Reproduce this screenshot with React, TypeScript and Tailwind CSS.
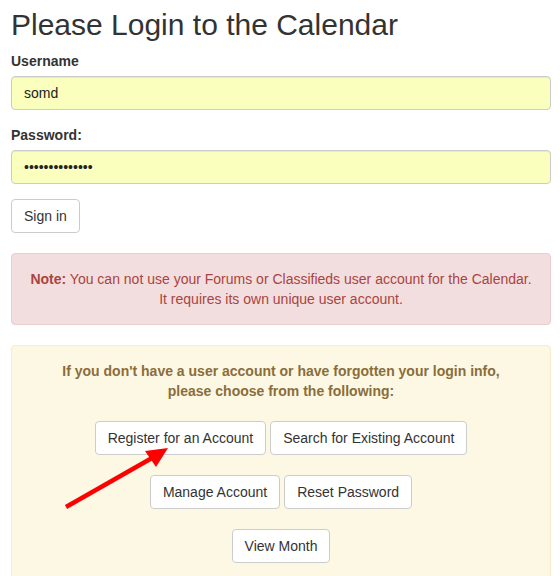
export default function App() {
  return (
    <div className="relative min-h-[576px] bg-white pl-[11px] pr-[9px] pt-[8px] font-['Liberation_Sans',Arial,sans-serif] text-[14px] leading-[20px] text-[#333]">
      {/* Title */}
      <h1 className="text-[30px] leading-[33px] font-normal text-[#333]">Please Login to the Calendar</h1>

      {/* Form */}
      <form onSubmit={(e) => e.preventDefault()}>
        <label className="mt-[10px] mb-[5px] block font-bold">Username</label>
        <input
          type="text"
          readOnly
          value="somd"
          className="block h-[34px] w-full rounded border border-[#ccc] bg-[#faffbd] px-3 text-[14px] text-[#222] shadow-[inset_0_1px_1px_rgba(0,0,0,0.075)] outline-none"
        />
        <label className="mt-[15px] mb-[5px] block font-bold">Password:</label>
        <input
          type="password"
          readOnly
          value="somdpassword12"
          className="block h-[34px] w-full rounded border border-[#ccc] bg-[#faffbd] px-3 text-[14px] text-[#222] shadow-[inset_0_1px_1px_rgba(0,0,0,0.075)] outline-none"
        />
        <button
          type="submit"
          className="mt-[15px] h-[34px] rounded border border-[#ccc] bg-white px-3 text-[14px] text-[#333]"
        >
          Sign in
        </button>
      </form>

      {/* Note */}
      <div className="mt-[20px] rounded border border-[#ebccd1] bg-[#f2dede] p-[15px] text-center text-[#a94442]">
        <b>Note:</b> You can not use your Forums or Classifieds user account for the Calendar.
        <br />
        It requires its own unique user account.
      </div>

      {/* Help box */}
      <div className="mt-[20px] rounded border border-[#faebcc] bg-[#fcf8e3] px-[15px] pt-[15px] pb-[20px] text-center">
        <p className="font-bold text-[#8a6d3b]">
          If you don't have a user account or have forgotten your login info,
          <br />
          please choose from the following:
        </p>
        <div className="mt-[20px] flex flex-col items-center gap-[20px]">
          <div className="flex gap-[4px]">
            <HelpButton label="Register for an Account" />
            <HelpButton label="Search for Existing Account" />
          </div>
          <div className="flex gap-[4px]">
            <HelpButton label="Manage Account" />
            <HelpButton label="Reset Password" />
          </div>
          <div className="flex gap-[4px]">
            <HelpButton label="View Month" />
          </div>
        </div>
      </div>

      {/* Red annotation arrow */}
      <svg
        className="pointer-events-none absolute left-0 top-0"
        width="560"
        height="576"
        viewBox="0 0 560 576"
      >
        <line x1="66" y1="507" x2="152" y2="458" stroke="#ff0000" strokeWidth="4.5" strokeLinecap="butt" />
        <polygon points="168,448 145,451 156,467" fill="#ff0000" />
      </svg>
    </div>
  )
}

function HelpButton({ label }: { label: string }) {
  return (
    <button className="h-[34px] rounded border border-[#ccc] bg-white px-3 text-[14px] text-[#333]">
      {label}
    </button>
  )
}
